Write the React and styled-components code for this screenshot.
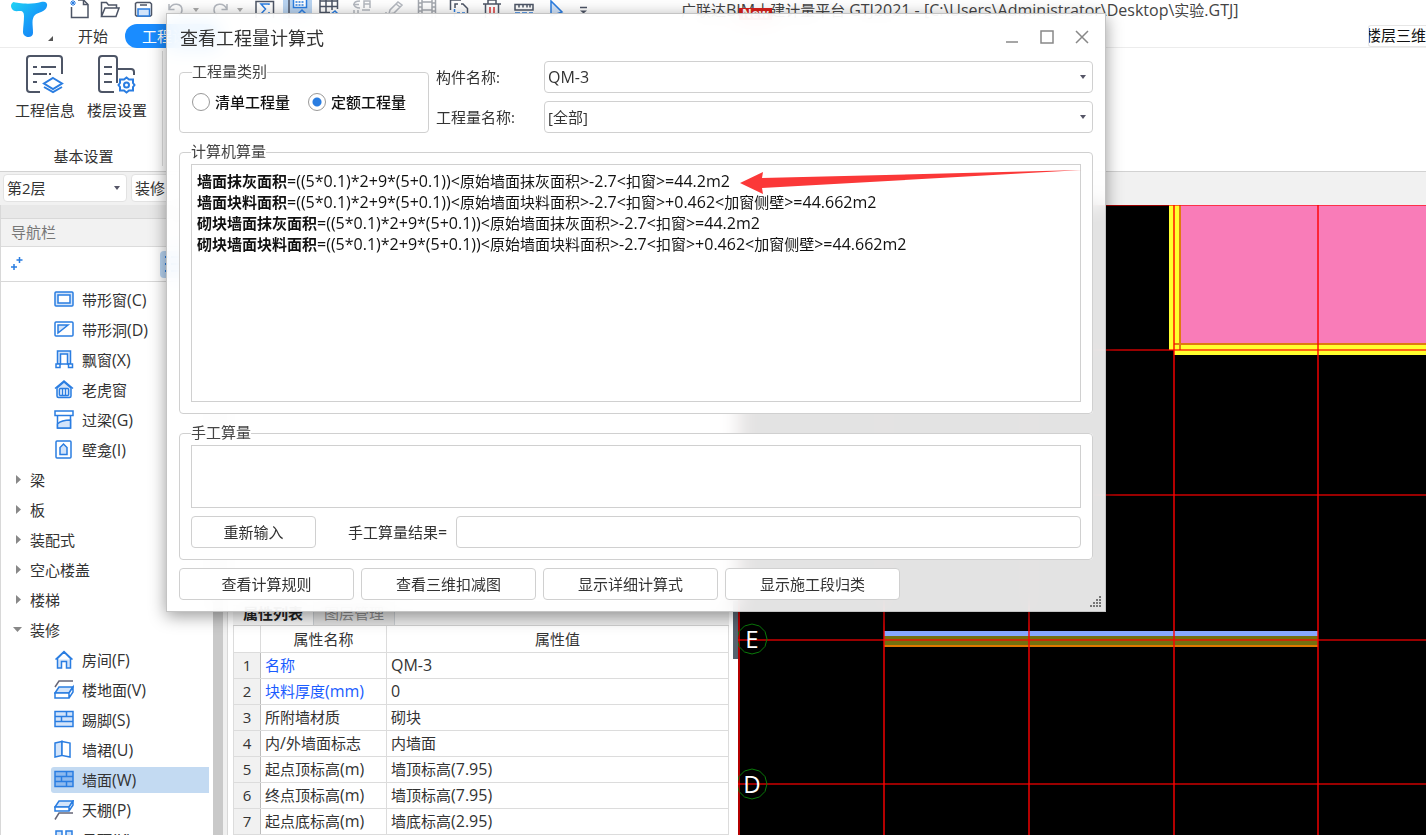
import React from 'react';
import styled, { createGlobalStyle, css } from 'styled-components';

const GlobalStyle = createGlobalStyle`
  * { box-sizing: border-box; }
  html, body { margin: 0; padding: 0; }
  body {
    font-family: 'Open Sans', 'Noto Sans CJK SC', sans-serif;
    font-size: 15px;
    line-height: 20px;
    color: #333;
    background: #fff;
  }
  button, input, select, textarea { font: inherit; color: inherit; }
`;

const LatinRun = styled.span`
  font-size: 16px;
  line-height: 1;
`;

/* The Latin face is drawn one size up so that it balances the Han glyphs. */
function Txt({ children }) {
  return String(children)
    .split(/([\x21-\x7e][\x20-\x7e]*)/)
    .filter(Boolean)
    .map((run, i) => (/^[\x21-\x7e]/.test(run) ? <LatinRun key={i}>{run}</LatinRun> : run));
}

/* ---------- frame ---------- */
const Shell = styled.div`
  position: relative;
  display: flex;
  flex-direction: column;
  height: 100vh;
  overflow: hidden;
`;

const TopBar = styled.header`
  display: flex;
  height: 48px;
  border-bottom: 1px solid #ececec;
`;
const LogoButton = styled.button`
  flex: none;
  display: flex;
  align-items: flex-start;
  width: 66px;
  height: 47px;
  padding: 0 0 0 10px;
  border: 0;
  background: none;
`;
const TopRows = styled.div`
  flex: 1;
  min-width: 0;
  display: flex;
  flex-direction: column;
`;
const QuickRow = styled.div`
  flex: none;
  display: flex;
  height: 24px;
`;
const QuickTools = styled.div`
  flex: none;
  width: 615px;
  display: flex;
`;
const QuickButton = styled.button`
  flex: none;
  width: ${(p) => p.$w}px;
  height: 19px;
  padding: 0;
  border: 0;
  display: flex;
  justify-content: center;
  background: ${(p) => (p.$on ? '#b9d4f1' : 'none')};
  & > svg {
    flex: none;
  }
`;
const WindowTitle = styled.h1`
  margin: 0;
  font-size: 15px;
  font-weight: 400;
  line-height: 20px;
  color: #444;
  white-space: pre;
`;
const TabRow = styled.nav`
  flex: none;
  display: flex;
  height: 24px;
  align-items: center;
`;
const Tab = styled.button`
  height: 24px;
  padding: 0 12px;
  border: 0;
  background: none;
  line-height: 24px;
  ${(p) =>
    p.$active &&
    css`
      margin-left: 5px;
      padding: 0 17px;
      border-radius: 12px;
      background: #1a8cff;
      color: #fff;
    `}
`;
const ViewButton = styled.button`
  margin-left: auto;
  width: 58px;
  height: 22px;
  padding: 0;
  display: flex;
  justify-content: flex-end;
  overflow: hidden;
  border: 1px solid #e6e6e6;
  border-right: 0;
  border-radius: 3px 0 0 3px;
  background: #fff;
  color: #111;
  line-height: 18px;
  white-space: nowrap;
`;
const NewBadge = styled.span`
  position: absolute;
  left: 739px;
  top: 8px;
  width: 33px;
  height: 12px;
  background: #d8201c;
  color: #fff;
  font-size: 12px;
  line-height: 12px;
  font-weight: 700;
  text-align: center;
`;

const Ribbon = styled.section`
  flex: none;
  display: flex;
  height: 124px;
  border-bottom: 1px solid #d2d2d2;
`;
const RibbonGroup = styled.div`
  width: 163px;
  margin: 3px 0 5px;
  padding-left: 5px;
  border-right: 1px solid #dedede;
  display: flex;
  flex-direction: column;
`;
const RibbonItems = styled.div`
  display: flex;
  padding-left: 4px;
`;
const RibbonButton = styled.button`
  width: 72px;
  padding: 4px 0 0;
  border: 0;
  background: none;
  display: flex;
  flex-direction: column;
  align-items: center;
  gap: 5px;
  line-height: 20px;
  white-space: nowrap;
`;
const RibbonCaption = styled.div`
  margin-top: auto;
  text-align: center;
`;

const OptionBar = styled.div`
  flex: none;
  display: flex;
  gap: 4px;
  height: 33px;
  padding: 2px 3px 3px;
  background: #f1f1f1;
`;

/* ---------- drop-downs ---------- */
const SelectWrap = styled.div`
  position: relative;
  width: ${(p) => (p.$w ? p.$w + 'px' : 'auto')};
  height: ${(p) => p.$h}px;
`;
const SelectBox = styled.select`
  appearance: none;
  display: block;
  width: 100%;
  height: 100%;
  padding: 0 20px 0 3px;
  border: 1px solid ${(p) => p.$line || '#d0d0d0'};
  border-radius: 4px;
  background: #fff;
  font-size: ${(p) => p.$size || 15}px;
  line-height: 20px;
`;
const Caret = styled.span`
  position: absolute;
  right: 7px;
  top: 50%;
  margin-top: -2px;
  border: 3px solid transparent;
  border-top: 4px solid #556;
  border-bottom: 0;
  pointer-events: none;
`;
function Drop({ id, label, value, w, h, size, line }) {
  return (
    <SelectWrap $w={w} $h={h}>
      <SelectBox id={id} aria-label={label} $size={size} $line={line} defaultValue={value}>
        <option value={value}>{value}</option>
      </SelectBox>
      <Caret />
    </SelectWrap>
  );
}

/* ---------- work area ---------- */
const Work = styled.main`
  flex: 1;
  min-height: 0;
  display: flex;
`;
const NavPanel = styled.aside`
  flex: none;
  width: 223px;
  display: flex;
  flex-direction: column;
  border-left: 1px solid #d8d8d8;
  overflow: hidden;
`;
const NavStrip = styled.div`
  flex: none;
  height: 14px;
  background: #e8e8e8;
  border-bottom: 1px solid #d8d8d8;
`;
const NavHead = styled.h2`
  flex: none;
  margin: 0;
  height: 28px;
  padding: 3px 10px;
  background: #f2f2f2;
  border-bottom: 1px solid #dcdcdc;
  font-size: 15px;
  font-weight: 400;
  line-height: 20px;
  color: #777;
`;
const NavTools = styled.div`
  flex: none;
  height: 35px;
  padding: 4px 10px 4px 9px;
  display: flex;
  align-items: center;
  justify-content: space-between;
  border-bottom: 1px solid #d8d8d8;
`;
const NavTool = styled.button`
  height: 27px;
  padding: 0 ${(p) => (p.$on ? 5 : 0)}px;
  border: 0;
  border-radius: 4px;
  display: flex;
  align-items: center;
  background: ${(p) => (p.$on ? '#b8d4f2' : 'none')};
  ${(p) => p.$on && 'width: 53px;'}
`;
const NavBody = styled.div`
  flex: 1;
  min-height: 0;
  display: flex;
`;
const Tree = styled.ul`
  flex: 1;
  display: flex;
  flex-direction: column;
  margin: 0;
  padding: 3px 4px 0 0;
  list-style: none;
`;
const Scroll = styled.div`
  width: 10px;
  background: #c9c9c9;
`;
const TreeGroup = styled.li`
  flex: none;
  display: flex;
  align-items: center;
  height: 30px;
  padding-left: 12px;
  gap: 7px;
`;
const TreeLeaf = styled.li`
  flex: none;
  display: flex;
  align-items: center;
  height: 26px;
  margin: 2px 0 2px 50px;
  padding-left: 3px;
  gap: 8px;
  border-radius: 3px 0 0 3px;
  background: ${(p) => (p.$on ? '#c3daf2' : 'none')};
  white-space: nowrap;
`;

const Middle = styled.section`
  flex: none;
  width: 515px;
  display: flex;
  flex-direction: column;
  border-left: 4px solid #f0f0f0;
`;
const ListArea = styled.div`
  flex: none;
  height: 396px;
  background: #fff;
`;
const PropArea = styled.div`
  flex: 1;
  min-height: 0;
  display: flex;
  padding-left: 5px;
  border-left: 1px solid #d8d8d8;
`;
const PropPanel = styled.div`
  flex: 1;
  display: flex;
  flex-direction: column;
`;
const PropTabs = styled.div`
  flex: none;
  display: flex;
  height: 25px;
  background: #ececec;
  border-bottom: 1px solid #cfcfcf;
`;
const PropTab = styled.button`
  height: 24px;
  padding: 0 10px;
  border: 1px solid #c8ccd0;
  border-width: 0 1px 0 0;
  background: ${(p) => (p.$on ? '#f4f4f4' : '#e0e0e0')};
  color: ${(p) => (p.$on ? '#222' : '#888')};
  font-weight: ${(p) => (p.$on ? 700 : 400)};
  line-height: 22px;
`;
const PropScroll = styled.div`
  width: 5px;
  margin-left: 4px;
  background: #fff;
`;
const PropThumb = styled.div`
  height: 58px;
  background: #56636f;
`;
const Table = styled.table`
  width: 100%;
  border-collapse: collapse;
  table-layout: fixed;
  border-left: 1px solid #ddd;
`;
const Col = styled.col`
  width: ${(p) => (p.$w ? p.$w + 'px' : 'auto')};
`;
const Th = styled.th`
  height: 26px;
  padding: 0;
  border: 1px solid #dcdcdc;
  border-top: 0;
  font-weight: 400;
  line-height: 20px;
`;
const Td = styled.td`
  height: 26px;
  padding: 0 4px;
  border: 1px solid #dcdcdc;
  line-height: 20px;
  white-space: nowrap;
  color: ${(p) => (p.$blue ? '#1a5cff' : 'inherit')};
`;
const IndexCell = styled(Th)`
  border-right-color: #bcbcbc;
  background: #f1f1f1;
`;

const Canvas = styled.section`
  flex: 1;
  min-width: 0;
  background: #000;
`;
const Drawing = styled.svg`
  display: block;
  width: 100%;
  height: 100%;
`;

/* ---------- dialog ---------- */
const Dialog = styled.div`
  position: absolute;
  left: 166px;
  top: 13px;
  width: 940px;
  padding: 0 12px 11px;
  border: 1px solid #c4c4c4;
  background: rgba(255, 255, 255, 0.89);
  backdrop-filter: blur(10px);
  box-shadow: 0 4px 16px rgba(0, 0, 0, 0.4);
`;
const DialogHead = styled.div`
  display: flex;
  align-items: center;
  height: 47px;
  padding: 0 4px 0 1px;
`;
const DialogTitle = styled.h2`
  flex: 1;
  margin: 0;
  font-size: 18px;
  font-weight: 400;
  line-height: 24px;
`;
const WinButton = styled.button`
  width: 35px;
  height: 26px;
  padding: 0 0 2px;
  border: 0;
  background: none;
  display: flex;
  justify-content: flex-end;
  align-items: center;
`;
const TopRow = styled.div`
  display: flex;
  gap: 7px;
`;
const Group = styled.fieldset`
  margin: 0;
  min-width: 0;
  padding: 2px 11px 11px;
  border: 1px solid #d0d0d0;
  border-radius: 4px;
  background: #fff;
`;
const KindGroup = styled(Group)`
  flex: none;
  width: 250px;
  height: 71px;
  margin-top: 1px;
  padding: 10px 12px 0;
  display: flex;
  gap: 18px;
`;
const Legend = styled.legend`
  padding: 0;
  height: 20px;
  line-height: 18px;
  color: #444;
`;
const RadioLabel = styled.label`
  display: flex;
  align-items: center;
  gap: 5px;
  height: 20px;
  color: #111;
  font-weight: 500;
`;
const Radio = styled.input`
  appearance: none;
  width: 18px;
  height: 18px;
  margin: 0;
  border: 1px solid #999;
  border-radius: 50%;
  background: #fff;
  &:checked {
    background: radial-gradient(circle, #2a7de1 0 4px, #fff 5px);
  }
`;
const Fields = styled.div`
  flex: 1;
  display: grid;
  grid-template-columns: 100px 1fr;
  grid-auto-rows: 32px;
  gap: 8px;
  align-items: center;
`;
const AutoGroup = styled(Group)`
  margin-top: 9px;
`;
const Formulas = styled.div`
  height: 238px;
  padding: 6px 5px;
  border: 1px solid #d0d0d0;
  background: #fff;
  color: #111;
`;
const Formula = styled.p`
  margin: 0;
  height: 21px;
  line-height: 21px;
  white-space: nowrap;
`;
const Strong = styled.b`
  font-weight: 700;
`;
const Manual = styled.textarea`
  display: block;
  width: 100%;
  height: 63px;
  border: 1px solid #d0d0d0;
  background: #fff;
  resize: none;
`;
const ManualRow = styled.div`
  display: flex;
  align-items: center;
  margin-top: 8px;
`;
const Button = styled.button`
  width: ${(p) => p.$w}px;
  height: 32px;
  padding: 0;
  border: 1px solid #d0d0d0;
  border-radius: 4px;
  background: #fff;
`;
const ResultLabel = styled.label`
  margin: 0 9px 0 32px;
`;
const ResultInput = styled.input`
  flex: 1;
  min-width: 0;
  height: 32px;
  border: 1px solid #d0d0d0;
  border-radius: 4px;
  background: #fff;
`;
const Actions = styled.div`
  display: flex;
  gap: 7px;
  margin-top: 8px;
`;
const Grip = styled.svg`
  position: absolute;
  right: 3px;
  bottom: 3px;
`;
const Arrow = styled.svg`
  position: absolute;
  left: 572px;
  top: 154px;
  pointer-events: none;
`;

/* ---------- icons ---------- */
const S = ({ w = 20, h = 20, c = '#2a7de1', children }) => (
  <svg width={w} height={h} viewBox={`0 0 ${w} ${h}`} fill="none" stroke={c} strokeWidth="1.5" aria-hidden="true">
    {children}
  </svg>
);
const light = '#d3e4fa';
const slate = '#4d5566';
const blue = '#2a7de1';

const leafIcons = {
  window: <><rect x="1" y="2" width="18" height="14" rx="1" fill={light} /><rect x="4" y="5" width="12" height="8" fill="#fff" /></>,
  hole: <><rect x="1" y="2" width="18" height="14" rx="1" /><path d="M4 13V5h10z" fill={light} /></>,
  bay: <><path d="M3.500 14V1h13v13h-3V4h-7v10z" fill={light} /><path d="M2 14h4v3.500H2zM14.500 14h4v3.500h-4z" fill="#fff" /><path d="M6 14h8.500" /></>,
  dormer: <><path d="M3 8v8a1.500 1.500 0 0 0 1.500 1.500h11A1.500 1.500 0 0 0 17 16V8l-7-6z" fill={light} /><path d="M1 8.500L10 1l9 7.500" /><rect x="5.500" y="8.500" width="9" height="7" rx="1" fill="#fff" /><path d="M8.500 8.500v7M11.500 8.500v7" /></>,
  lintel: <><rect x="1" y="1" width="18" height="4.500" fill="#fff" /><path d="M3.500 5.500V18h13V5.500" /><path d="M3.500 14c3-3 7-4 13-4v8h-13z" fill={light} /></>,
  niche: <><rect x="2" y="1" width="15" height="17" rx="1" fill="#fff" /><path d="M6 14.500V7.500L9.500 4 13 7.500v7z" fill={light} /></>,
  house: <><path d="M1.500 9.500L10 1.500l8.500 8M3.500 8.500V18h4v-6.500h5V18h4V8.500L10 2z" fill={light} /></>,
  floor: <><path d="M1 7l4-6h14" stroke="#667" /><path d="M1 13l4-6h14l-4 6z" fill={light} /><path d="M1 13h14v5H1zM15 13l4-6v5l-4 6" fill="#fff" /></>,
  bricks: <><rect x="1" y="1.500" width="18" height="15" fill={light} /><path d="M1 6.500h18M1 11.500h18M12.500 1.500v5M7.500 6.500v5" /></>,
  dado: <><path d="M1 3l7-1.500v14L1 17z" fill={light} /><path d="M8 1.500L16 3v14l-8-1.500z" fill="#fff" /></>,
  bricksOn: <><rect x="1" y="1.500" width="18" height="15" fill="#8db9ee" /><path d="M1 6.500h18M1 11.500h18M12.500 1.500v5M7.500 6.500v5M12.500 11.500v5" /></>,
  ceiling: <><path d="M1 19.500l4-6.500h14" stroke="#667" /><path d="M1 7l4-6h14l-4 6z" fill={light} /><path d="M1 7h14v4H1zM15 7l4-6v4l-4 6" fill="#fff" /></>,
  suspended: <><path d="M2 1h6v6H2zM12 1h6v6h-6z" fill={light} /><path d="M2 10h16v6H2z" /></>,
};

function Leaf({ icon, text, on }) {
  return (
    <TreeLeaf $on={on}>
      <S>{leafIcons[icon]}</S>
      <span><Txt>{text}</Txt></span>
    </TreeLeaf>
  );
}
function Branch({ text, open }) {
  return (
    <TreeGroup>
      <svg width="10" height="10" viewBox="0 0 10 10" aria-hidden="true">
        <path d={open ? 'M0 2h9L4.500 7z' : 'M3 0v9l5-4.500z'} fill="#888" />
      </svg>
      {text}
    </TreeGroup>
  );
}

const windows = [
  ['window', '带形窗(C)'],
  ['hole', '带形洞(D)'],
  ['bay', '飘窗(X)'],
  ['dormer', '老虎窗'],
  ['lintel', '过梁(G)'],
  ['niche', '壁龛(I)'],
];
const finishes = [
  ['house', '房间(F)'],
  ['floor', '楼地面(V)'],
  ['bricks', '踢脚(S)'],
  ['dado', '墙裙(U)'],
  ['bricksOn', '墙面(W)'],
  ['ceiling', '天棚(P)'],
  ['suspended', '吊顶(K)'],
];
const props = [
  ['名称', 'QM-3', true],
  ['块料厚度(mm)', '0', true],
  ['所附墙材质', '砌块'],
  ['内/外墙面标志', '内墙面'],
  ['起点顶标高(m)', '墙顶标高(7.95)'],
  ['终点顶标高(m)', '墙顶标高(7.95)'],
  ['起点底标高(m)', '墙底标高(2.95)'],
];
const formulas = [
  ['墙面抹灰面积', '=((5*0.1)*2+9*(5+0.1))<原始墙面抹灰面积>-2.7<扣窗>=44.2m2'],
  ['墙面块料面积', '=((5*0.1)*2+9*(5+0.1))<原始墙面块料面积>-2.7<扣窗>+0.462<加窗侧壁>=44.662m2'],
  ['砌块墙面抹灰面积', '=((5*0.1)*2+9*(5+0.1))<原始墙面抹灰面积>-2.7<扣窗>=44.2m2'],
  ['砌块墙面块料面积', '=((5*0.1)*2+9*(5+0.1))<原始墙面块料面积>-2.7<扣窗>+0.462<加窗侧壁>=44.662m2'],
];

const caret = <path d="M7 8h6l-3 4z" fill="#aaa" stroke="none" />;
const quick = [
  { n: '新建', w: 28, c: slate, d: <><path d="M8 0h5.500L18 4.500V17.500H1.500V7" /><path d="M13.500 0v4.500H18" /><path d="M0 3h6M3 0v6M1 1l4 4M5 1L1 5" stroke={blue} strokeWidth="1" /></> },
  { n: '打开', w: 31, c: slate, d: <path d="M1.500 16.500V2.500h5l2 2.500h8v3M1.500 16.500L5 8h14l-3 8.500z" /> },
  { n: '保存', w: 38, c: slate, d: <><path d="M1.500 15V3.500l1.500-1h13l1.500 1.500V15l-1 1h-14z" /><path d="M4 16V9h11.500v7z" stroke={blue} fill={light} /><path d="M6 5h7" /></> },
  { n: '撤销', w: 26, c: '#b5b9c0', d: <path d="M3 4v5.500h5.500M3 9.500C6 2 16 3 16 10c0 3-1 4-3 5.500" /> },
  { n: '撤销列表', w: 14, c: '#aaa', d: caret },
  { n: '重做', w: 30, c: '#b5b9c0', d: <path d="M19 4v5.500h-5.500M19 9.500C16 2 6 3 6 10c0 3 1 4 3 5.500" /> },
  { n: '重做列表', w: 14, c: '#aaa', d: caret },
  { n: '汇总', w: 36, c: slate, d: <><path d="M1 18V1.500h17.500V18" /><path d="M14 5V4H6l4.500 5L6 14h8v-2" stroke={blue} /></> },
  { n: '查看', w: 29, on: true, c: slate, d: <><path d="M1 0v18" /><rect x="5.500" y="-1" width="13" height="8.500" stroke={blue} fill="#fff" /><path d="M7.500 2h9M7.500 5h9" stroke={blue} strokeDasharray="2 1" /><path d="M10 14l4-4 4 4" stroke={blue} /></> },
  { n: '表格', w: 34, c: slate, d: <><path d="M1 0v12.500h10M18.500 0v9M1 1h17.500M1 6.500h17.500M7 0v12.500M13 0v10" /><path d="M12 14l4-3 3 3" stroke={blue} /></> },
  { n: '转换', w: 32, c: '#b5b9c0', d: <><path d="M12 8V1h6v7M12 4h6M8 1C3 1 2 3 2 4.500S4 8 8 8M1 4.500h6M2 10v8M6 10v3M10 10h8" /></> },
  { n: '编辑', w: 32, c: '#b5b9c0', d: <path d="M5 14l1-4 8-8 4 3-8 8zM1 13h2M12 4l4 3" /> },
  { n: '图层', w: 33, c: '#a5a9b0', d: <path d="M1.500 0v18M5 0v18M15 0v18M18.500 0v18M1.500 3H5M1.500 11H5M5 2h10M5 10h10M15 3h3.500M15 11h3.500M1.500 7H5M15 7h3.500" /> },
  { n: '复制', w: 32, c: slate, d: <><path d="M1.500 10V0H12" /><path d="M6 8V4h3M12 4h2l4.500 4.500V14" /><path d="M5.500 9v9M8 13h9" stroke={blue} strokeDasharray="3 2" /></> },
  { n: '删除', w: 33, c: slate, d: <><path d="M1 4h18M6 4V0h8v4M3.500 4v14M16.500 4v14" /><path d="M8 7v8M12 7v8" stroke="#d33" /></> },
  { n: '测量', w: 32, c: slate, d: <><path d="M1 4.500h18V10H1zM5 4.500v3M9 4.500v3M13 4.500v3M16 4.500v3" /><path d="M1 13h18" stroke={blue} strokeDasharray="5 2" /></> },
  { n: '选择', w: 34, c: blue, d: <path d="M4 1v15l11-4z" fill={light} /> },
  { n: '更多', w: 18, c: slate, d: <><path d="M7 7.500h7" /><path d="M7 10.500h7l-3.500 3z" fill={slate} stroke="none" /></> },
];

const gridX = [1, 146, 291, 436, 580, 725];
const gridY = [0, 145, 290, 435, 579, 724];
const gripDots = [[9, 0], [6, 3], [9, 3], [3, 6], [6, 6], [9, 6], [0, 9], [3, 9], [6, 9], [9, 9]];

export default function App() {
  return (
    <Shell>
      <GlobalStyle />
      <TopBar>
        <LogoButton aria-label="主菜单">
          <svg width="46" height="46" viewBox="0 0 46 46" aria-hidden="true">
            <defs>
              <linearGradient id="tl" x1="0" y1="0" x2="1" y2="1">
                <stop offset="0" stopColor="#20d4f4" />
                <stop offset="0.500" stopColor="#17a0f8" />
                <stop offset="1" stopColor="#1678f5" />
              </linearGradient>
            </defs>
            <path
              d="M5 2C1 2 0 6 2 9c2 3 5 2 8 2 3 0 4 2 4 5 0 6-1 11-1 16 0 6 10 7 10 1 0-8-2-14 2-18 3-3 11-3 12-9 1-4-3-5-6-4-6 2-16 2-22 1-2 0-5-1-7-1z"
              fill="url(#tl)"
            />
            <path d="M43 36v5h-5z" fill="#555" />
          </svg>
        </LogoButton>
        <TopRows>
          <QuickRow>
            <QuickTools>
              {quick.map((q) => (
                <QuickButton key={q.n} aria-label={q.n} $w={q.w} $on={q.on}>
                  <S w={20} h={19} c={q.c}>{q.d}</S>
                </QuickButton>
              ))}
            </QuickTools>
            <WindowTitle>
              <Txt>广联达BIM土建计量平台 GTJ2021 - [C:\Users\Administrator\Desktop\实验.GTJ]</Txt>
            </WindowTitle>
          </QuickRow>
          <TabRow>
            <Tab>开始</Tab>
            <Tab $active>工程设置</Tab>
            <ViewButton>楼层三维</ViewButton>
          </TabRow>
        </TopRows>
        <NewBadge>New</NewBadge>
      </TopBar>

      <Ribbon>
        <RibbonGroup>
          <RibbonItems>
            <RibbonButton>
              <S w={40} h={40} c={slate}>
                <g strokeWidth="2">
                  <path d="M15 37H5a3 3 0 0 1-3-3V4a3 3 0 0 1 3-3h29a3 3 0 0 1 3 3v15" />
                  <path d="M8 12h4M16 12h15M8 19h14M24 19h2M8 27h4" />
                </g>
                <path d="M28 23l9 5.500-9 5.500-9-5.500zM19 32l9 5 9-5" stroke={blue} strokeWidth="2" />
              </S>
              工程信息
            </RibbonButton>
            <RibbonButton>
              <S w={40} h={40} c={slate}>
                <g strokeWidth="2">
                  <path d="M17 37H5a3 3 0 0 1-3-3V4a3 3 0 0 1 3-3h12a3 3 0 0 1 3 3v24M20 14h14a3 3 0 0 1 3 3v3" />
                  <path d="M7 12h8M7 19h8M7 27h8" />
                </g>
                <g stroke={blue} strokeWidth="2">
                  <path d="M29.500 22.500l2.500 2h4v3.500l1.500 2-1.500 2v3.500h-4l-2.500 2-2.500-2h-4V32l-1.500-2 1.500-2v-3.500h4z" />
                  <circle cx="29.500" cy="30" r="2.500" />
                </g>
              </S>
              楼层设置
            </RibbonButton>
          </RibbonItems>
          <RibbonCaption>基本设置</RibbonCaption>
        </RibbonGroup>
      </Ribbon>

      <OptionBar>
        <Drop label="楼层" value="第2层" w={124} h={28} line="#e2e2e2" />
        <Drop label="构件类型" value="装修" w={124} h={28} line="#e2e2e2" />
      </OptionBar>

      <Work>
        <NavPanel>
          <NavStrip />
          <NavHead>导航栏</NavHead>
          <NavTools>
            <NavTool aria-label="添加">
              <S w={14} h={16}>
                <path d="M9.500 1v6M6.500 4h6M4 8v6M1 11h6" />
              </S>
            </NavTool>
            <NavTool $on aria-label="列表">
              <S w={18} h={20}>
                <path d="M0 3h3M0 10h3M0 17h3M6 3h11M6 10h11M6 17h11" strokeWidth="2" />
              </S>
            </NavTool>
          </NavTools>
          <NavBody>
            <Tree>
              {windows.map(([i, t]) => <Leaf key={t} icon={i} text={t} />)}
              {['梁', '板', '装配式', '空心楼盖', '楼梯'].map((t) => <Branch key={t} text={t} />)}
              <Branch text="装修" open />
              {finishes.map(([i, t]) => <Leaf key={t} icon={i} text={t} on={i === 'bricksOn'} />)}
            </Tree>
            <Scroll />
          </NavBody>
        </NavPanel>

        <Middle>
          <ListArea />
          <PropArea>
            <PropPanel>
              <PropTabs>
                <PropTab $on>属性列表</PropTab>
                <PropTab>图层管理</PropTab>
              </PropTabs>
              <Table>
                <colgroup><Col $w={27} /><Col $w={126} /><Col /></colgroup>
                <thead>
                  <tr><Th aria-label="序号" /><Th>属性名称</Th><Th>属性值</Th></tr>
                </thead>
                <tbody>
                  {props.map(([k, v, isBlue], i) => (
                    <tr key={k}>
                      <IndexCell scope="row">{i + 1}</IndexCell>
                      <Td $blue={isBlue}><Txt>{k}</Txt></Td>
                      <Td><Txt>{v}</Txt></Td>
                    </tr>
                  ))}
                </tbody>
              </Table>
            </PropPanel>
            <PropScroll><PropThumb /></PropScroll>
          </PropArea>
        </Middle>

        <Canvas>
          <Drawing aria-label="轴网">
            <rect x="436" y="0" width="1200" height="145" fill="#f97cb8" />
            <rect x="431" y="0" width="12" height="145" fill="#ffff2e" />
            <rect x="436" y="138" width="1200" height="12" fill="#ffff2e" />
            <path d="M442 0v145M436 139h1200" stroke="#e07a10" strokeWidth="2" />
            <rect x="146" y="426" width="434" height="5" fill="#88a8ff" />
            <rect x="146" y="431" width="434" height="9" fill="#75700f" />
            <rect x="146" y="440" width="434" height="2" fill="#e07800" />
            <g stroke="#ff0000" strokeWidth="2">
              {gridX.map((x) => <path key={x} d={`M${x} 0v2000`} strokeOpacity="0.700" />)}
              {gridY.map((y) => <path key={y} d={`M0 ${y}h3000`} strokeOpacity="0.600" />)}
            </g>
            {[['E', 434], ['D', 579]].map(([t, y]) => (
              <g key={t}>
                <polygon
                  points={Array.from({ length: 12 }, (_, i) => {
                    const a = (i * Math.PI) / 6;
                    return `${14 + 15 * Math.sin(a)},${y - 15 * Math.cos(a)}`;
                  }).join(' ')}
                  fill="none"
                  stroke="#0a7a0a"
                />
                <text x="14" y={y + 9} textAnchor="middle" fontSize="24" fill="#fff">{t}</text>
              </g>
            ))}
          </Drawing>
        </Canvas>
      </Work>

      <Dialog role="dialog" aria-labelledby="dlg-title">
        <DialogHead>
          <DialogTitle id="dlg-title">查看工程量计算式</DialogTitle>
          <WinButton aria-label="最小化"><S w={14} h={14} c="#888"><path d="M1 12h12" /></S></WinButton>
          <WinButton aria-label="最大化"><S w={14} h={14} c="#888"><rect x="1" y="1" width="12" height="12" /></S></WinButton>
          <WinButton aria-label="关闭"><S w={14} h={14} c="#888"><path d="M1 1l12 12M13 1L1 13" /></S></WinButton>
        </DialogHead>

        <TopRow>
          <KindGroup>
            <Legend>工程量类别</Legend>
            <RadioLabel><Radio type="radio" name="kind" />清单工程量</RadioLabel>
            <RadioLabel><Radio type="radio" name="kind" defaultChecked />定额工程量</RadioLabel>
          </KindGroup>
          <Fields>
            <label htmlFor="part">构件名称:</label>
            <Drop id="part" value="QM-3" h={32} size={16} />
            <label htmlFor="qty">工程量名称:</label>
            <Drop id="qty" value="[全部]" h={32} />
          </Fields>
        </TopRow>

        <AutoGroup>
          <Legend>计算机算量</Legend>
          <Formulas>
            {formulas.map(([k, v]) => (
              <Formula key={k}><Strong>{k}</Strong><Txt>{v}</Txt></Formula>
            ))}
          </Formulas>
        </AutoGroup>

        <AutoGroup>
          <Legend>手工算量</Legend>
          <Manual aria-label="手工算量" />
          <ManualRow>
            <Button $w={125}>重新输入</Button>
            <ResultLabel htmlFor="result"><Txt>手工算量结果=</Txt></ResultLabel>
            <ResultInput id="result" />
          </ManualRow>
        </AutoGroup>

        <Actions>
          <Button $w={175}>查看计算规则</Button>
          <Button $w={175}>查看三维扣减图</Button>
          <Button $w={175}>显示详细计算式</Button>
          <Button $w={175}>显示施工段归类</Button>
        </Actions>

        <Arrow width="346" height="28" viewBox="0 0 346 28" aria-hidden="true">
          <path d="M1 15L24 4l-1 6L343 2 23 20l1 6z" fill="#fb3838" />
        </Arrow>
        <Grip width="12" height="12" viewBox="0 0 12 12" aria-hidden="true">
          {gripDots.map(([x, y]) => (
            <rect key={`${x}-${y}`} x={x} y={y} width="2" height="2" fill="#777" />
          ))}
        </Grip>
      </Dialog>
    </Shell>
  );
}
